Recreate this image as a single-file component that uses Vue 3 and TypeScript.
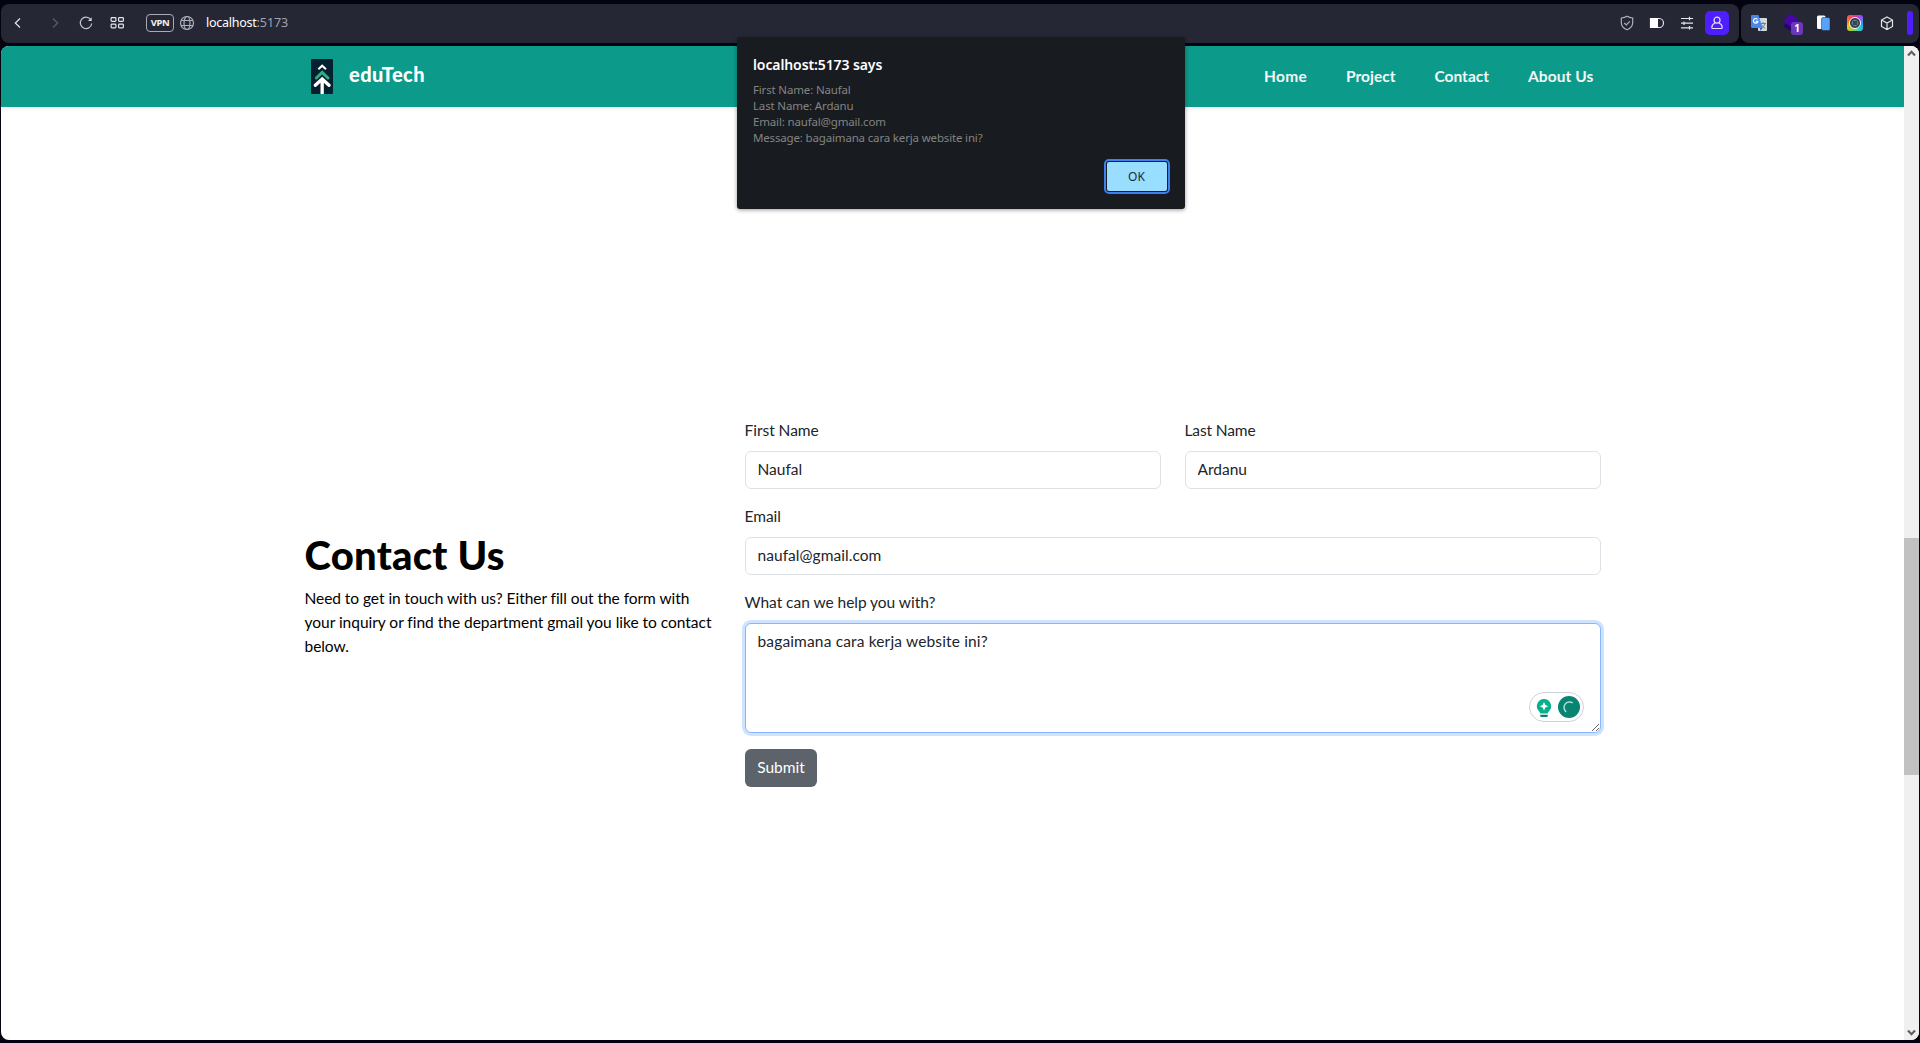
<script setup lang="ts">
import { ref } from 'vue'

const host = 'localhost'
const port = ':5173'
const firstName = ref('Naufal')
const lastName = ref('Ardanu')
const email = ref('naufal@gmail.com')
const message = ref('bagaimana cara kerja website ini?')
</script>

<template>
  <div class="browser">
    <div class="toolbar">
      <div class="group main-group">
        <svg class="ic back" viewBox="0 0 24 24"><path d="M14 7.5 9.3 12l4.7 4.5" /></svg>
        <svg class="ic forward" viewBox="0 0 24 24"><path d="M10 7.5 14.7 12 10 16.5" /></svg>
        <svg class="ic reload" viewBox="0 0 24 24"><path d="M16.6 8.5A5.7 5.7 0 1 0 17.7 12.5" /><path d="M17.7 6.2V10H14z" fill="#d6d7de" stroke="none" /></svg>
        <svg class="ic tiles" viewBox="0 0 24 24"><rect x="6.1" y="6.6" width="4.8" height="3.8" rx=".8" /><rect x="13.6" y="6.6" width="4.8" height="3.8" rx=".8" /><rect x="6.1" y="13.1" width="4.8" height="3.8" rx=".8" /><rect x="13.6" y="13.1" width="4.8" height="3.8" rx=".8" /></svg>
        <span class="vpn">VPN</span>
        <svg class="ic globe" viewBox="0 0 24 24"><circle cx="12" cy="12" r="6.5" /><ellipse cx="12" cy="12" rx="3" ry="6.5" /><path d="M6.2 9.5h11.6M6.2 14.5h11.6" /></svg>
        <span class="url"><span class="host">{{ host }}</span><span class="port">{{ port }}</span></span>
        <div class="actions">
          <svg class="ic dim" viewBox="0 0 24 24"><path d="M12 5.3c2 1.3 3.8 1.6 5.7 1.7v4.5c0 3.5-2.2 5.9-5.7 7.3-3.500-1.400-5.700-3.800-5.700-7.300V7c1.900-.1 3.700-.4 5.700-1.700z" /><path d="m9.300 12 2 2 3.500-3.700" /></svg>
          <svg class="ic" viewBox="0 0 24 24"><path d="M5.5 7.5h8.800a4.200 4.500 0 0 1 0 9H5.500z" /><rect x="5" y="7" width="8" height="10" fill="#fff" stroke="none" /></svg>
          <svg class="ic" viewBox="0 0 24 24"><path d="M6 7.5h12M6 12.2h12M6 16.800h12M14.500 5.700v3.600M9 10.400V14M14.500 15v3.600" /></svg>
          <span class="account"><svg class="ic" viewBox="0 0 24 24"><circle cx="12" cy="9.200" r="3" /><path d="M10 12c-2 .9-3.200 2.300-3.200 4.400 0 .7.400 1.100 1.100 1.100h8.200c.7 0 1.100-.4 1.100-1.100 0-2.100-1.200-3.500-3.200-4.400" /></svg></span>
        </div>
      </div>
      <div class="group ext-group">
        <svg class="ext" viewBox="0 0 24 24">
          <rect x="11" y="7" width="9" height="13" rx="1" fill="#d5d8dc" />
          <path d="M13 12.500h6M16 11v1.500M18 12.500c-.7 2.700-2.200 4-4 5M14.500 13.500c.8 2 2 3 3.800 4" fill="none" stroke="#73828f" />
          <path d="M5 4h6.500L15.500 17H5.500A1.500 1.500 0 0 1 4 15.500V5a1 1 0 0 1 1-1z" fill="#4a87ed" />
          <path d="M10.500 8.300A2.300 2.300 0 1 0 11 10.300H8.700" fill="none" stroke="#fff" stroke-width="1.200" />
          <path d="m13 17 2.500 0-2 3z" fill="#2f5db9" />
        </svg>
        <span class="layers">
          <svg class="ext" viewBox="0 0 24 24"><path d="m4 15 7.500-5 7.500 5-7.500 5z" fill="#28036b" /><path d="m4 10 7.500-7 8.500 5.500-8.500 7z" fill="#4707a8" /></svg>
          <span class="badge">1</span>
        </span>
        <svg class="ext" viewBox="0 0 24 24"><rect x="6" y="4.500" width="8.500" height="13.500" rx="1.500" fill="#fff" /><rect x="10.500" y="6.500" width="8.500" height="13" rx="1.500" fill="#59a2fb" stroke="#252735" stroke-width=".5" /></svg>
        <span class="ring"><i></i></span>
        <svg class="ic" viewBox="0 0 24 24"><path d="m12 6 5.500 3v6.500L12 18.500l-5.500-3V9zM6.500 9l5.500 3 5.500-3M12 12v6.500" /></svg>
        <span class="strip"></span>
      </div>
    </div>

    <div class="viewport">
      <div class="page">
        <header class="navbar">
          <div class="container nav-inner">
            <a class="brand">
              <svg class="logo" viewBox="0 0 66 105" fill="none">
                <rect width="66" height="105" rx="3" fill="#05202f" />
                <path d="m22 31 11.500-11L45 31" stroke="#fff" stroke-width="6" />
                <path d="m16 57 17.500-17L51 57" stroke="#2fac84" stroke-width="9" stroke-linecap="round" />
                <path d="m13 79 20.500-19L54 79M33.500 62v43" stroke="#fff" stroke-width="10" stroke-linecap="round" />
              </svg>
              <span class="brand-name">eduTech</span>
            </a>
            <nav class="links">
              <a class="home">Home</a>
              <a class="project">Project</a>
              <a class="contact">Contact</a>
              <a class="about">About Us</a>
            </nav>
          </div>
        </header>

        <section class="container contact-section">
          <div class="intro">
            <h1>Contact Us</h1>
            <p>Need to get in touch with us? Either fill out the form with<br /><span class="second">your inquiry or find the department gmail you like to contact</span><br />below.</p>
          </div>
          <form class="form" @submit.prevent>
            <div class="row">
              <label class="field"><span class="caption">First Name</span><input v-model="firstName" type="text" /></label>
              <label class="field"><span class="caption tight">Last Name</span><input v-model="lastName" type="text" /></label>
            </div>
            <label class="field"><span class="caption">Email</span><input v-model="email" class="email" type="text" /></label>
            <div class="field">
              <span class="caption">What can we help you with?</span>
              <div class="area">
                <textarea v-model="message" spellcheck="false"></textarea>
                <div class="assistant">
                  <svg class="bulb" viewBox="0 0 16 20"><path d="M8 1a7.200 7.200 0 0 0-5 12.300l1.500 2.200h7l1.500-2.200A7.200 7.200 0 0 0 8 1z" fill="#08b08d" /><path d="M4.300 16.800h7.400v1.400a.8.800 0 0 1-.8.800H5.100a.8.800 0 0 1-.8-.8z" fill="#087f6c" /><path d="m8 4 1.300 2.900 2.900 1.300-2.900 1.300L8 12.400 6.700 9.500 3.800 8.200l2.900-1.300z" fill="#fff" /></svg>
                  <svg class="spinner" viewBox="0 0 22 22"><circle cx="11" cy="11" r="11" fill="#088472" /><path d="M14.800 7A5.400 5.400 0 0 0 8.200 15.800" fill="none" stroke="#a9ddd3" stroke-width="1.500" /></svg>
                </div>
              </div>
            </div>
            <button class="submit" type="submit">Submit</button>
          </form>
        </section>
      </div>

      <div class="scrollbar">
        <svg viewBox="0 0 15 15"><path d="m4 9.500 3.500-3.700L11 9.500" /></svg>
        <div class="thumb"></div>
        <svg class="down" viewBox="0 0 15 15"><path d="M4 5.500 7.500 9.200 11 5.500" /></svg>
      </div>
    </div>

    <div class="dialog">
      <div class="dialog-title">{{ host }}{{ port }} says</div>
      <div class="dialog-body">
        <div>First Name: {{ firstName }}</div>
        <div>Last Name: {{ lastName }}</div>
        <div>Email: {{ email }}</div>
        <div>Message: {{ message }}</div>
      </div>
      <button class="ok" type="button">OK</button>
    </div>
  </div>
</template>

<style>
body {
  margin: 0;
  overflow: hidden;
  background: #03040f;
}
</style>

<style scoped>
* {
  box-sizing: border-box;
}
.browser {
  position: relative;
  width: 1920px;
  height: 1043px;
  display: flex;
  flex-direction: column;
  padding: 4px 1px 3px;
  background: #03040f;
  font-family: Lato, "Noto Sans", sans-serif;
}
.toolbar {
  display: flex;
  gap: 2px;
  height: 39px;
  margin-bottom: 3px;
  flex: none;
}
.group {
  display: flex;
  align-items: center;
  padding-bottom: 1px;
  background: #252735;
  border-radius: 8px;
}
.main-group {
  flex: 1;
  padding-left: 5px;
  padding-right: 10px;
}
.ext-group {
  width: 178px;
  padding-left: 6px;
  gap: 8px;
}
.ic,
.ext {
  width: 24px;
  height: 24px;
  flex: none;
  display: block;
}
.ic {
  fill: none;
  stroke: #e4e5ea;
  stroke-width: 1.2;
}
.dim,
.globe {
  stroke: #aeb0ba;
}
.forward {
  margin-left: 13px;
  stroke: #5b5d69;
}
.reload {
  margin-left: 7px;
  stroke: #c6c7cf;
}
.tiles {
  margin-left: 7px;
}
.vpn {
  width: 28px;
  height: 18px;
  margin-left: 17px;
  border: 1.5px solid #a9aab3;
  border-radius: 4px;
  font: 700 9.5px/15px "Noto Sans", sans-serif;
  letter-spacing: -0.4px;
  text-align: center;
  color: #f3f3f5;
}
.globe {
  margin-left: 1px;
}
.url {
  margin-left: 7px;
  font: 400 12.5px/20px "Noto Sans", sans-serif;
  color: #fff;
}
.host {
  letter-spacing: -0.25px;
}
.port {
  letter-spacing: -0.1px;
  color: #a0a2ae;
}
.actions {
  display: flex;
  gap: 6px;
  margin-left: auto;
}
.account {
  border-radius: 5px;
  background: #4f1eff;
}
.layers {
  position: relative;
}
.badge {
  position: absolute;
  left: 12px;
  top: 11px;
  width: 12px;
  height: 13px;
  border-radius: 3px;
  background: #6b38b8;
  color: #fff;
  font: 700 10px/13px "Noto Sans", sans-serif;
  text-align: center;
}
.ring {
  width: 16px;
  height: 16px;
  margin: 0 4px;
  border-radius: 3px;
  display: flex;
  align-items: center;
  justify-content: center;
  background: conic-gradient(#f0299b, #9f4df5 12%, #2f93f5 25%, #30d6c5 42%, #8ed544 55%, #f7c11b 68%, #f7742a 80%, #f0299b);
}
.ring i {
  width: 12px;
  height: 12px;
  border: 1.5px solid #fff;
  border-radius: 50%;
  background: radial-gradient(#33475a 30%, #6e7b86 36%, #26333e 60%);
}
.strip {
  width: 6px;
  height: 24px;
  border-radius: 3px;
  background: #4f1eff;
}
.viewport {
  flex: 1;
  display: flex;
  overflow: hidden;
  border-radius: 8px;
  background: #fff;
}
.page {
  flex: 1;
}
.container {
  width: 1320px;
  margin: 0 auto;
  padding: 0 12px;
}
.navbar {
  height: 61px;
  background: #0c9b8a;
  box-shadow: 0 2px 4px rgba(0, 0, 0, 0.075);
}
.nav-inner {
  display: flex;
  align-items: center;
  justify-content: space-between;
  height: 61px;
}
.brand {
  display: flex;
  align-items: center;
  padding-left: 6.5px;
}
.logo {
  width: 22px;
  height: 35px;
}
.brand-name {
  margin: -6px 0 0 16px;
  font-size: 20px;
  font-weight: 900;
  line-height: 30px;
  letter-spacing: 0.42px;
  color: #fff;
}
.links {
  display: flex;
  gap: 39px;
  padding: 0 7px 1px 0;
  font-size: 15.5px;
  font-weight: 700;
  line-height: 24px;
  color: #f2f8f7;
}
.home {
  letter-spacing: 0.3px;
}
.about {
  letter-spacing: 0.1px;
}
.contact-section {
  display: flex;
  align-items: center;
  padding-top: 312px;
}
.intro {
  width: 440px;
  padding-right: 24px;
  color: #000;
}
h1 {
  margin: 0 0 7px;
  font-size: 40px;
  font-weight: 900;
  line-height: 48px;
  letter-spacing: 0.25px;
}
p {
  margin: 0 0 17px;
  font-size: 15.5px;
  line-height: 24px;
  letter-spacing: -0.05px;
  white-space: nowrap;
}
.second {
  letter-spacing: -0.02px;
}
.form {
  width: 856px;
  font-size: 15.5px;
  color: #212529;
}
.row {
  display: flex;
  gap: 24px;
}
.field {
  display: flex;
  flex: 1;
  flex-direction: column;
  gap: 8px;
  margin-bottom: 16px;
}
.caption {
  padding-bottom: 2px;
  line-height: 22px;
  letter-spacing: -0.03px;
}
.tight {
  letter-spacing: -0.12px;
}
input,
textarea {
  display: block;
  width: 100%;
  height: 38px;
  margin: 0;
  padding: 5px 12px 7px;
  border: 1px solid #dee2e6;
  border-radius: 6px;
  background: #fff;
  color: #212529;
  font: 400 15.5px/24px Lato, "Noto Sans", sans-serif;
  outline: none;
}
.email {
  letter-spacing: 0.05px;
}
.area {
  position: relative;
}
textarea {
  height: 110px;
  resize: vertical;
  letter-spacing: 0.15px;
  border-color: #86b7fe;
  box-shadow: 0 0 0 3px #cfe2ff;
}
.assistant {
  position: absolute;
  right: 17px;
  bottom: 11px;
  width: 55px;
  height: 30px;
  display: flex;
  align-items: center;
  gap: 6px;
  padding-left: 6px;
  border: 1px solid #d0d1dd;
  border-radius: 15px;
  background: #fff;
}
.bulb {
  width: 16px;
  height: 20px;
  margin-top: 2px;
}
.spinner {
  width: 22px;
  height: 22px;
}
.submit {
  display: block;
  width: 72px;
  height: 38px;
  padding: 0 0 2px 1px;
  border: 0;
  border-radius: 6px;
  background: #5c636a;
  color: #fff;
  font: 400 15.5px/24px Lato, "Noto Sans", sans-serif;
}
.scrollbar {
  display: flex;
  flex-direction: column;
  width: 15px;
  background: #f0f0f0;
}
.scrollbar svg {
  width: 15px;
  height: 15px;
  fill: none;
  stroke: #606060;
  stroke-width: 2.2;
}
.thumb {
  height: 237px;
  margin-top: 477px;
  background: #c1c1c1;
}
.scrollbar .down {
  margin-top: auto;
}
.dialog {
  position: absolute;
  left: 737px;
  top: 37px;
  width: 448px;
  height: 172px;
  display: flex;
  flex-direction: column;
  padding: 18px 18px 18px 16px;
  border-radius: 3px;
  background: #181b1f;
  box-shadow: 0 1px 4px rgba(0, 0, 0, 0.4);
  font-family: "Noto Sans", sans-serif;
}
.dialog-title {
  font-size: 14px;
  font-weight: 600;
  line-height: 20px;
  letter-spacing: -0.1px;
  color: #fff;
}
.dialog-body {
  margin-top: 7px;
  font-size: 11.5px;
  line-height: 16px;
  letter-spacing: -0.16px;
  color: #848484;
}
.ok {
  width: 60px;
  height: 29px;
  margin: auto 0 0 auto;
  padding: 0 1px 0 0;
  border: 0;
  border-radius: 2px;
  outline: 2px solid #3b82f0;
  outline-offset: 1px;
  background: #99ddff;
  color: #1c2a33;
  font: 400 12px/28px "Noto Sans", sans-serif;
}
</style>
